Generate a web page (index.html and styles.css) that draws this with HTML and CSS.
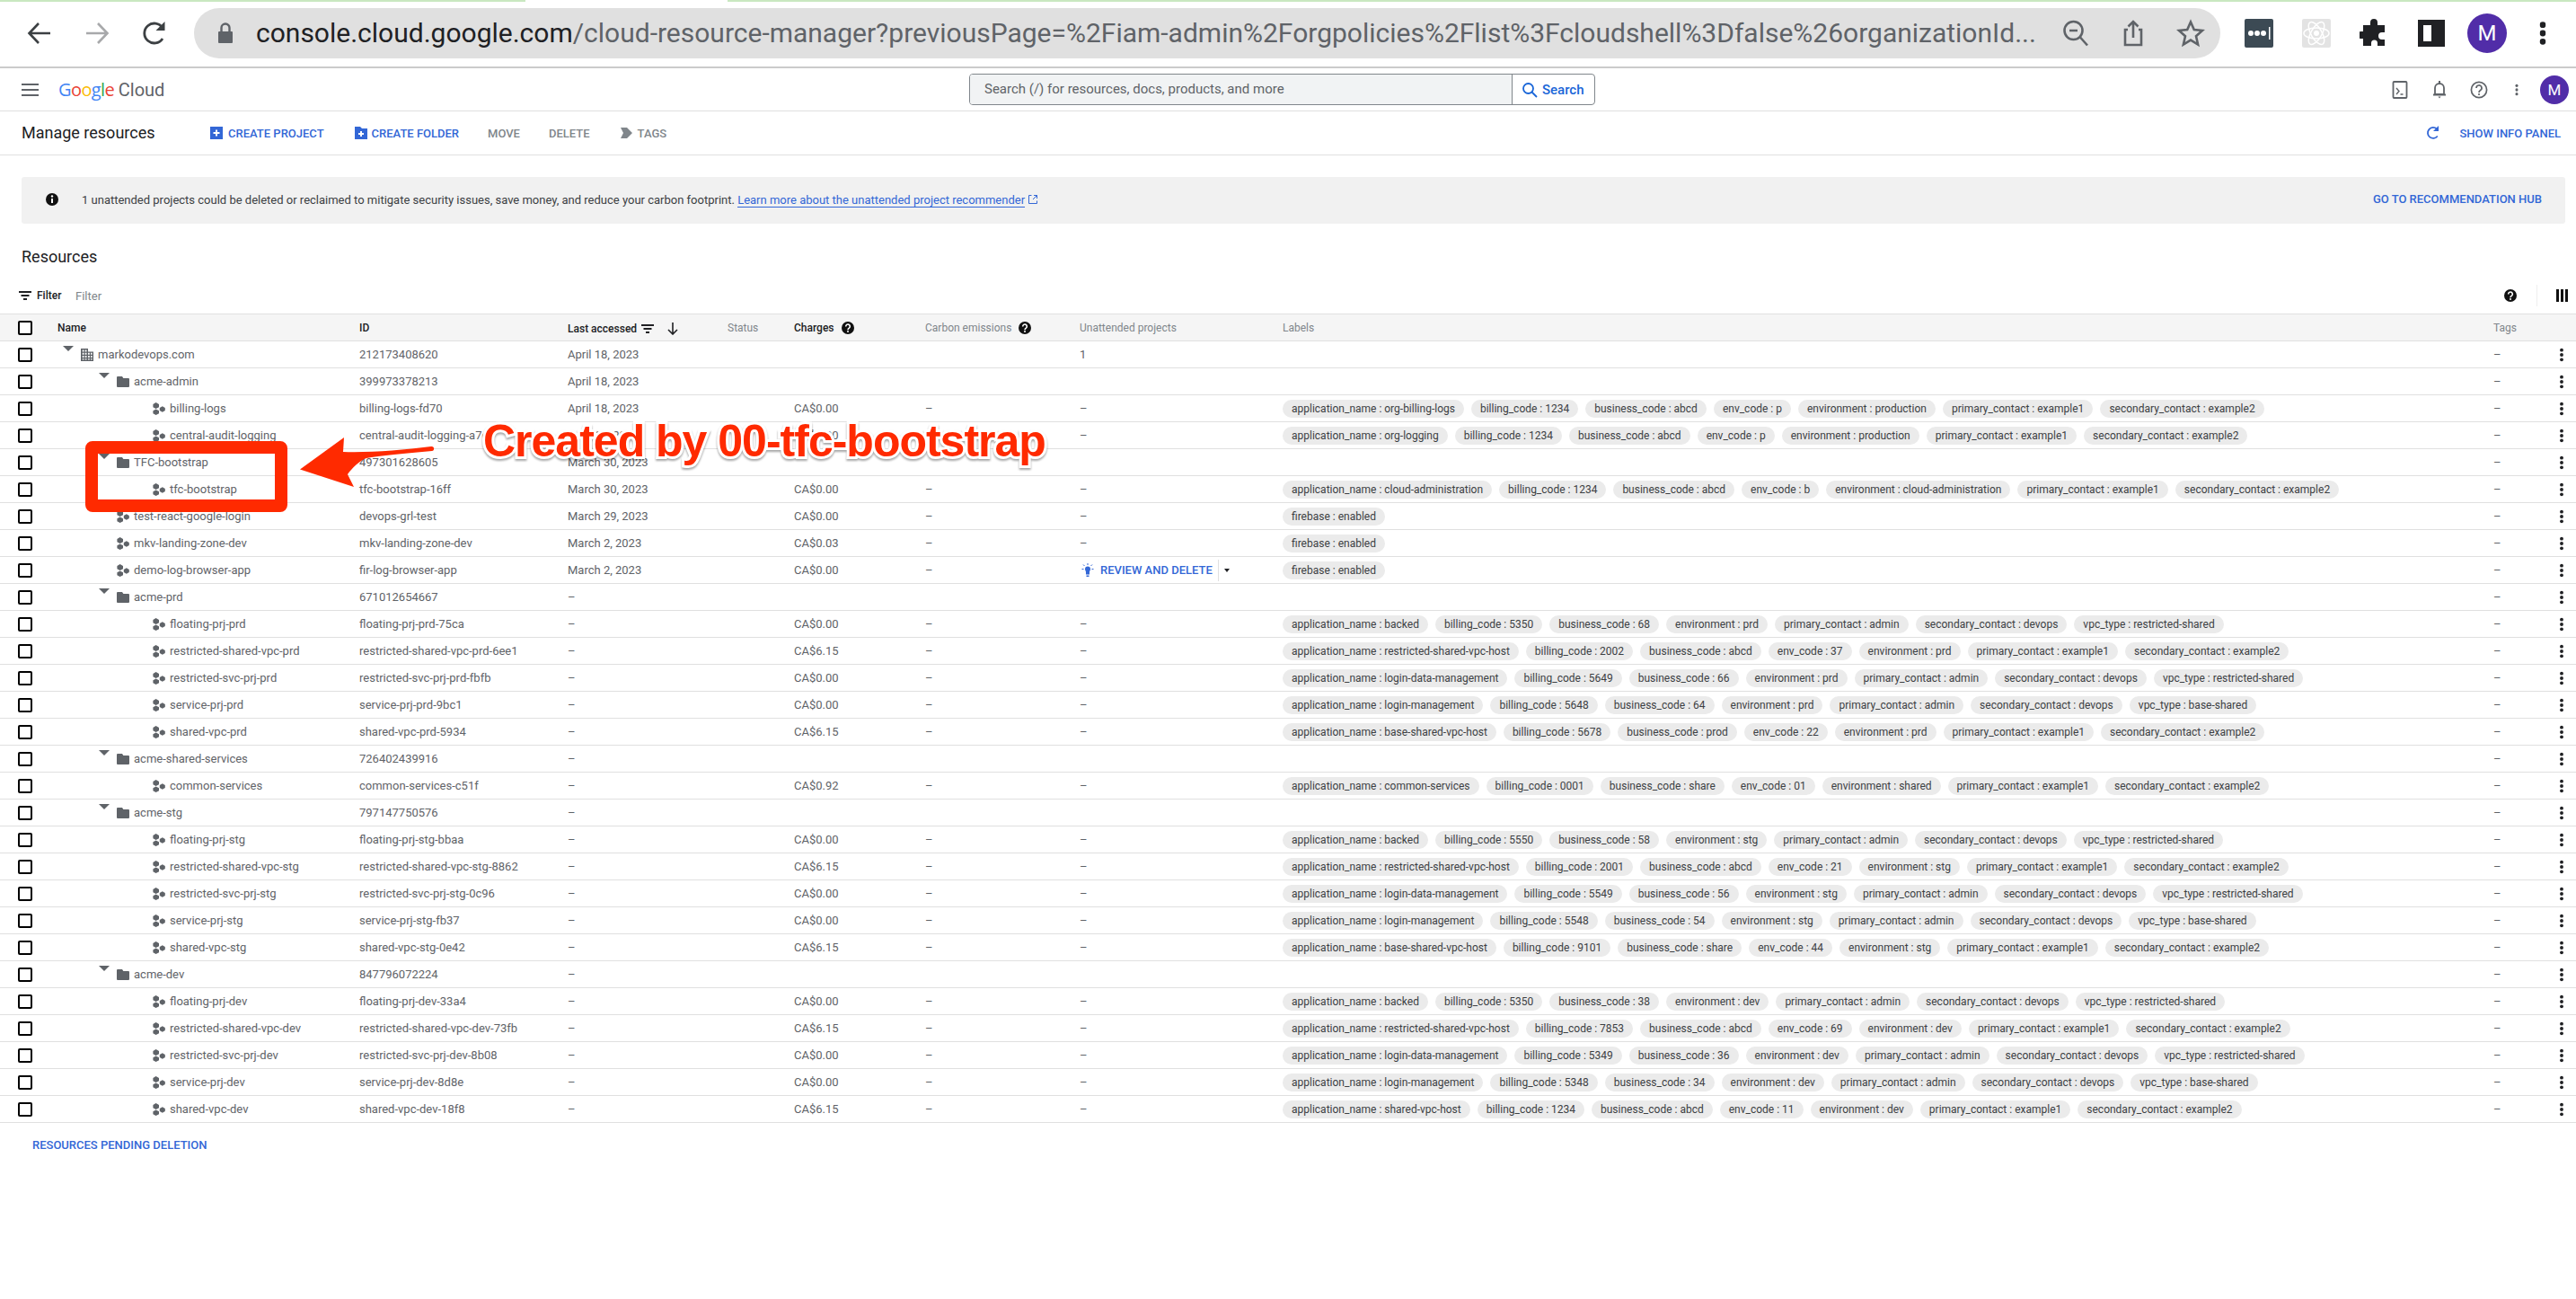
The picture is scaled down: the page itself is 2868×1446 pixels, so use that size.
FILE: index.html
```html
<!DOCTYPE html>
<html lang="en">
<head>
<meta charset="utf-8">
<title>Manage resources</title>
<link rel="stylesheet" href="styles.css">
</head>
<body>
<svg class="defs" width="0" height="0" aria-hidden="true">
  <symbol id="i-proj" viewBox="0 0 14 14"><path fill="#5f6368" d="M3.6 0 7 1.9v3.3L3.6 7 .4 5.2V1.9zM3.6 7.4 7 9.3v3L3.6 14 .4 12.3v-3zM10.8 4.3l3 1.6v3.2l-3 1.6-3-1.6V5.9z"/></symbol>
  <symbol id="i-folder" viewBox="0 0 14 12"><path fill="#5f6368" d="M0 1a1 1 0 0 1 1-1h5l1.4 2H13a1 1 0 0 1 1 1v8a1 1 0 0 1-1 1H1a1 1 0 0 1-1-1z"/></symbol>
  <symbol id="i-org" viewBox="0 0 14 14"><path fill="#5f6368" fill-rule="evenodd" d="M0 0h8v3.5h6V14H0zM1.7 1.6v1.9h1.8V1.6zm3 0v1.9h1.8V1.6zm-3 3.2v1.9h1.8V4.8zm3 0v1.9h1.8V4.8zm3.3 0v1.9h1.8V4.8zm3 0v1.9h1.6V4.8zM1.7 8v1.9h1.8V8zm3 0v1.9h1.8V8zM8 8v1.9h1.8V8zm3 0v1.9h1.6V8zm-9.3 3.2v1.4h1.8v-1.4zm3 0v1.4h1.8v-1.4zm3.3 0v1.4h1.8v-1.4zm3 0v1.4h1.6v-1.4z"/></symbol>
  <symbol id="i-kebab" viewBox="0 0 6 24"><circle cx="3" cy="4" r="2.9"/><circle cx="3" cy="12" r="2.9"/><circle cx="3" cy="20" r="2.9"/></symbol>
  <symbol id="i-help" viewBox="0 0 14 14"><circle cx="7" cy="7" r="7" fill="#111"/><path fill="none" stroke="#fff" stroke-width="1.6" d="M4.7 5.4A2.3 2.3 0 1 1 8.4 7.2c-.9.6-1.4 1-1.4 2"/><circle cx="7" cy="11" r="1" fill="#fff"/></symbol>
</svg>

<div class="tabstrip"><span class="tab-a"></span><span class="tab-b"></span></div>

<header class="chrome">
  <svg class="cicon" viewBox="0 0 32 32"><path fill="none" stroke="#3c4043" stroke-width="2.6" d="M28 16H5M15 5 4.5 16 15 27"/></svg>
  <svg class="cicon" viewBox="0 0 32 32"><path fill="none" stroke="#a8a9ab" stroke-width="2.6" d="M4 16h23M17 5l10.500 11L17 27"/></svg>
  <svg class="cicon" viewBox="0 0 32 32"><path fill="none" stroke="#3c4043" stroke-width="2.8" d="M25 22a11 11 0 1 1 0-12"/><path fill="#3c4043" d="M27.500 3v10h-10z"/></svg>
  <div class="omnibox">
    <svg class="lock" viewBox="0 0 16 24"><path fill="#5f6368" d="M1 10h14a1 1 0 0 1 1 1v11a1 1 0 0 1-1 1H1a1 1 0 0 1-1-1V11a1 1 0 0 1 1-1z"/><path fill="none" stroke="#5f6368" stroke-width="2.400" d="M3.500 11V6a4.500 4.500 0 0 1 9 0v5"/></svg>
    <div class="url"><b>console.cloud.google.com</b>/cloud-resource-manager?previousPage=%2Fiam-admin%2Forgpolicies%2Flist%3Fcloudshell%3Dfalse%26organizationId...</div>
    <svg class="oicon" viewBox="0 0 32 32"><circle cx="13.500" cy="13" r="10" fill="none" stroke="#5f6368" stroke-width="2.600"/><path stroke="#5f6368" stroke-width="2.600" d="M9 13h9M21 20.500l8 9"/></svg>
    <svg class="oicon" viewBox="0 0 32 32"><path fill="none" stroke="#5f6368" stroke-width="2.600" d="M10 12H7v17h18V12h-3M16 21V3M10.500 8.500 16 3l5.500 5.500"/></svg>
    <svg class="oicon" viewBox="0 0 32 32"><path fill="none" stroke="#5f6368" stroke-width="2.600" d="m16 3.500 3.800 8.600 9.200.9-7 6.200 2.100 9.300L16 23.600l-8.100 4.900L10 19.200l-7-6.200 9.200-.9z"/></svg>
  </div>
  <div class="exts">
    <span class="ext ext-lp"><svg viewBox="0 0 32 32" width="32" height="32"><circle cx="7" cy="16" r="3" fill="#fff"/><circle cx="14" cy="16" r="3" fill="#fff"/><circle cx="21" cy="16" r="3" fill="#fff"/><rect x="27" y="9" width="1.500" height="14" fill="#fff"/></svg></span>
    <span class="ext ext-re"><svg viewBox="0 0 32 32" width="32" height="32"><g fill="none" stroke="#fff" stroke-width="1.500"><ellipse cx="16" cy="16" rx="14" ry="6"/><ellipse cx="16" cy="16" rx="14" ry="6" transform="rotate(60 16 16)"/><ellipse cx="16" cy="16" rx="14" ry="6" transform="rotate(120 16 16)"/></g><circle cx="16" cy="16" r="3" fill="#fff"/></svg></span>
    <svg class="ext-p" viewBox="0 0 32 32"><path fill="#202124" d="M12 4a4 4 0 0 1 8 0v3h8v8h-3a4 4 0 0 0 0 8h3v7h-8v-3a3.500 3.500 0 0 0-7 0v3H4v-8H2a4 4 0 0 1 0-8h2V7h8z"/></svg>
    <svg class="ext-p" viewBox="0 0 32 32"><path fill="#202124" fill-rule="evenodd" d="M1 1h30v30H1zM7 7v18h9V7z"/></svg>
    <span class="avatar avatar-l">M</span>
    <svg class="ckebab" viewBox="0 0 6 24"><use href="#i-kebab"/></svg>
  </div>
</header>

<div class="appbar">
  <div class="burger"><span></span><span></span><span></span></div>
  <div class="logo"><i class="g-b">G</i><i class="g-r">o</i><i class="g-y">o</i><i class="g-b">g</i><i class="g-g">l</i><i class="g-r">e</i> <em>Cloud</em></div>
  <div class="search">
    <div class="search-in">Search (/) for resources, docs, products, and more</div>
    <div class="search-btn"><svg viewBox="0 0 18 18" width="18" height="18"><circle cx="7.500" cy="7.500" r="5.500" fill="none" stroke="#1a66d8" stroke-width="1.800"/><path stroke="#1a66d8" stroke-width="1.800" d="m11.500 11.500 5.500 5.500"/></svg>Search</div>
  </div>
  <div class="app-right">
    <svg class="aicon" viewBox="0 0 20 20"><rect x="2.500" y="1" width="15" height="18" rx="1" fill="none" stroke="#5f6368" stroke-width="1.800"/><path fill="none" stroke="#5f6368" stroke-width="1.400" d="m6 8 3 3.500L6 15M10.500 15h3"/></svg>
    <svg class="aicon" viewBox="0 0 20 20"><path fill="none" stroke="#5f6368" stroke-width="1.800" d="M5 15V8a5 5 0 0 1 10 0v7zM3 15.500h14"/><path fill="#5f6368" d="M8.500 17.500h3L10 19.500zM9 0h2v3H9z"/></svg>
    <svg class="aicon" viewBox="0 0 20 20"><circle cx="10" cy="10" r="8.600" fill="none" stroke="#5f6368" stroke-width="1.700"/><path fill="none" stroke="#5f6368" stroke-width="1.700" d="M7 8a3 3 0 1 1 4.500 2.500c-1 .7-1.500 1.200-1.500 2.500"/><circle cx="10" cy="15" r="1.100" fill="#5f6368"/></svg>
    <svg class="akebab" viewBox="0 0 6 24"><use href="#i-kebab"/></svg>
    <span class="avatar avatar-s">M</span>
  </div>
</div>

<div class="actionbar">
  <h1 class="page-title">Manage resources</h1>
  <div class="act blue a-cp"><svg viewBox="0 0 14 14" width="14" height="14"><rect width="14" height="14" fill="#3367d6"/><path stroke="#fff" stroke-width="2" d="M7 3.500v7M3.500 7h7"/></svg>CREATE PROJECT</div>
  <div class="act blue a-cf"><svg viewBox="0 0 14 14" width="14" height="14"><path fill="#3367d6" d="M0 0h6l2 2h6v12H0z"/><path stroke="#fff" stroke-width="2" d="M7 5v6M4 8h6"/></svg>CREATE FOLDER</div>
  <div class="act grey a-mv">MOVE</div>
  <div class="act grey a-dl">DELETE</div>
  <div class="act grey a-tg"><svg viewBox="0 0 13 14" width="13" height="14"><path fill="#80868b" d="M0 1h7l6 6-6 6H0l3-6z"/></svg>TAGS</div>
  <svg class="refresh" viewBox="0 0 16 16"><path fill="none" stroke="#3367d6" stroke-width="1.800" d="M12.800 11.500A6 6 0 1 1 12 3.500"/><path fill="#3367d6" d="M14 0v6H8z"/></svg>
  <div class="act blue">SHOW INFO PANEL</div>
</div>

<section class="banner">
  <svg class="banner-i" viewBox="0 0 14 14"><circle cx="7" cy="7" r="7" fill="#111"/><path stroke="#fff" stroke-width="2" d="M7 6v5"/><circle cx="7" cy="3.500" r="1.200" fill="#fff"/></svg>
  <p class="banner-t">1 unattended projects could be deleted or reclaimed to mitigate security issues, save money, and reduce your carbon footprint. <a class="link">Learn more about the unattended project recommender</a></p>
  <svg class="ext-link" viewBox="0 0 10 10"><path fill="none" stroke="#3367d6" d="M3.500.5H.5v9h9v-3M5 5 9.500.5M6 .5h3.500V4"/></svg>
  <div class="act blue hub">GO TO RECOMMENDATION HUB</div>
</section>

<h2 class="section-title">Resources</h2>

<div class="filter">
  <svg class="f-i" viewBox="0 0 14 10"><path stroke="#202124" stroke-width="1.800" d="M0 1h14M2.500 5h9M5 9h4"/></svg>
  <span class="f-l">Filter</span><span class="f-p">Filter</span>
  <svg class="f-h" viewBox="0 0 14 14"><use href="#i-help"/></svg>
  <span class="f-d"></span>
  <svg class="f-c" viewBox="0 0 13 14"><path fill="#111" d="M0 0h3v14H0zM5 0h3v14H5zM10 0h3v14h-3z"/></svg>
</div>

<div class="table">
  <div class="row head">
    <span class="chk"></span>
    <span class="c-name th">Name</span>
    <span class="c-id th">ID</span>
    <span class="c-date th sorted">Last accessed<svg class="s-f" viewBox="0 0 14 10"><path stroke="#202124" stroke-width="1.800" d="M0 1h14M2.500 5h9M5 9h4"/></svg><svg class="s-a" viewBox="0 0 12 14"><path fill="none" stroke="#202124" stroke-width="1.600" d="M6 0v13M1 8l5 5 5-5"/></svg></span>
    <span class="c-status th off">Status</span>
    <span class="c-charge th">Charges<svg class="th-h" viewBox="0 0 14 14"><use href="#i-help"/></svg></span>
    <span class="c-carbon th off">Carbon emissions<svg class="th-h" viewBox="0 0 14 14"><use href="#i-help"/></svg></span>
    <span class="c-unatt th off">Unattended projects</span>
    <span class="c-labels th off">Labels</span>
    <span class="c-tags th off">Tags</span>
  </div>

  <div class="row"><span class="chk"></span><span class="c-name l0"><i class="tri"></i><svg class="ic"><use href="#i-org"/></svg>markodevops.com</span><span class="c-id">212173408620</span><span class="c-date">April 18, 2023</span><span class="c-unatt">1</span><span class="c-tags">–</span><svg class="c-more"><use href="#i-kebab"/></svg></div>

  <div class="row"><span class="chk"></span><span class="c-name l1"><i class="tri"></i><svg class="ic f"><use href="#i-folder"/></svg>acme-admin</span><span class="c-id">399973378213</span><span class="c-date">April 18, 2023</span><span class="c-tags">–</span><svg class="c-more"><use href="#i-kebab"/></svg></div>

  <div class="row"><span class="chk"></span><span class="c-name l2"><svg class="ic"><use href="#i-proj"/></svg>billing-logs</span><span class="c-id">billing-logs-fd70</span><span class="c-date">April 18, 2023</span><span class="c-charge">CA$0.00</span><span class="c-carbon">–</span><span class="c-unatt">–</span><span class="c-labels"><b>application_name : org-billing-logs</b><b>billing_code : 1234</b><b>business_code : abcd</b><b>env_code : p</b><b>environment : production</b><b>primary_contact : example1</b><b>secondary_contact : example2</b></span><span class="c-tags">–</span><svg class="c-more"><use href="#i-kebab"/></svg></div>

  <div class="row"><span class="chk"></span><span class="c-name l2"><svg class="ic"><use href="#i-proj"/></svg>central-audit-logging</span><span class="c-id">central-audit-logging-a7e0</span><span class="c-date">April 18, 2023</span><span class="c-charge">CA$0.00</span><span class="c-carbon">–</span><span class="c-unatt">–</span><span class="c-labels"><b>application_name : org-logging</b><b>billing_code : 1234</b><b>business_code : abcd</b><b>env_code : p</b><b>environment : production</b><b>primary_contact : example1</b><b>secondary_contact : example2</b></span><span class="c-tags">–</span><svg class="c-more"><use href="#i-kebab"/></svg></div>

  <div class="row"><span class="chk"></span><span class="c-name l1"><i class="tri"></i><svg class="ic f"><use href="#i-folder"/></svg>TFC-bootstrap</span><span class="c-id">497301628605</span><span class="c-date">March 30, 2023</span><span class="c-tags">–</span><svg class="c-more"><use href="#i-kebab"/></svg></div>

  <div class="row"><span class="chk"></span><span class="c-name l2"><svg class="ic"><use href="#i-proj"/></svg>tfc-bootstrap</span><span class="c-id">tfc-bootstrap-16ff</span><span class="c-date">March 30, 2023</span><span class="c-charge">CA$0.00</span><span class="c-carbon">–</span><span class="c-unatt">–</span><span class="c-labels"><b>application_name : cloud-administration</b><b>billing_code : 1234</b><b>business_code : abcd</b><b>env_code : b</b><b>environment : cloud-administration</b><b>primary_contact : example1</b><b>secondary_contact : example2</b></span><span class="c-tags">–</span><svg class="c-more"><use href="#i-kebab"/></svg></div>

  <div class="row"><span class="chk"></span><span class="c-name l1"><svg class="ic p1"><use href="#i-proj"/></svg>test-react-google-login</span><span class="c-id">devops-grl-test</span><span class="c-date">March 29, 2023</span><span class="c-charge">CA$0.00</span><span class="c-carbon">–</span><span class="c-unatt">–</span><span class="c-labels"><b>firebase : enabled</b></span><span class="c-tags">–</span><svg class="c-more"><use href="#i-kebab"/></svg></div>

  <div class="row"><span class="chk"></span><span class="c-name l1"><svg class="ic p1"><use href="#i-proj"/></svg>mkv-landing-zone-dev</span><span class="c-id">mkv-landing-zone-dev</span><span class="c-date">March 2, 2023</span><span class="c-charge">CA$0.03</span><span class="c-carbon">–</span><span class="c-unatt">–</span><span class="c-labels"><b>firebase : enabled</b></span><span class="c-tags">–</span><svg class="c-more"><use href="#i-kebab"/></svg></div>

  <div class="row"><span class="chk"></span><span class="c-name l1"><svg class="ic p1"><use href="#i-proj"/></svg>demo-log-browser-app</span><span class="c-id">fir-log-browser-app</span><span class="c-date">March 2, 2023</span><span class="c-charge">CA$0.00</span><span class="c-carbon">–</span><span class="c-unatt review"><svg class="bulb" viewBox="0 0 14 16"><path fill="#3367d6" d="M4 6.500a3 3 0 0 1 6 0c0 1.500-1 2-1 3.500v2.500H5V10c0-1.500-1-2-1-3.500zM5.500 13.500h3V15h-3z"/><path stroke="#3367d6" d="M7 0v2M.5 6.500h2M11.500 6.500h2M2 1.500 3.500 3M12 1.500 10.500 3"/></svg><span class="rv-t">REVIEW AND DELETE</span><span class="rv-c"></span></span><span class="c-labels"><b>firebase : enabled</b></span><span class="c-tags">–</span><svg class="c-more"><use href="#i-kebab"/></svg></div>

  <div class="row"><span class="chk"></span><span class="c-name l1"><i class="tri"></i><svg class="ic f"><use href="#i-folder"/></svg>acme-prd</span><span class="c-id">671012654667</span><span class="c-date">–</span><span class="c-tags">–</span><svg class="c-more"><use href="#i-kebab"/></svg></div>

  <div class="row"><span class="chk"></span><span class="c-name l2"><svg class="ic"><use href="#i-proj"/></svg>floating-prj-prd</span><span class="c-id">floating-prj-prd-75ca</span><span class="c-date">–</span><span class="c-charge">CA$0.00</span><span class="c-carbon">–</span><span class="c-unatt">–</span><span class="c-labels"><b>application_name : backed</b><b>billing_code : 5350</b><b>business_code : 68</b><b>environment : prd</b><b>primary_contact : admin</b><b>secondary_contact : devops</b><b>vpc_type : restricted-shared</b></span><span class="c-tags">–</span><svg class="c-more"><use href="#i-kebab"/></svg></div>

  <div class="row"><span class="chk"></span><span class="c-name l2"><svg class="ic"><use href="#i-proj"/></svg>restricted-shared-vpc-prd</span><span class="c-id">restricted-shared-vpc-prd-6ee1</span><span class="c-date">–</span><span class="c-charge">CA$6.15</span><span class="c-carbon">–</span><span class="c-unatt">–</span><span class="c-labels"><b>application_name : restricted-shared-vpc-host</b><b>billing_code : 2002</b><b>business_code : abcd</b><b>env_code : 37</b><b>environment : prd</b><b>primary_contact : example1</b><b>secondary_contact : example2</b></span><span class="c-tags">–</span><svg class="c-more"><use href="#i-kebab"/></svg></div>

  <div class="row"><span class="chk"></span><span class="c-name l2"><svg class="ic"><use href="#i-proj"/></svg>restricted-svc-prj-prd</span><span class="c-id">restricted-svc-prj-prd-fbfb</span><span class="c-date">–</span><span class="c-charge">CA$0.00</span><span class="c-carbon">–</span><span class="c-unatt">–</span><span class="c-labels"><b>application_name : login-data-management</b><b>billing_code : 5649</b><b>business_code : 66</b><b>environment : prd</b><b>primary_contact : admin</b><b>secondary_contact : devops</b><b>vpc_type : restricted-shared</b></span><span class="c-tags">–</span><svg class="c-more"><use href="#i-kebab"/></svg></div>

  <div class="row"><span class="chk"></span><span class="c-name l2"><svg class="ic"><use href="#i-proj"/></svg>service-prj-prd</span><span class="c-id">service-prj-prd-9bc1</span><span class="c-date">–</span><span class="c-charge">CA$0.00</span><span class="c-carbon">–</span><span class="c-unatt">–</span><span class="c-labels"><b>application_name : login-management</b><b>billing_code : 5648</b><b>business_code : 64</b><b>environment : prd</b><b>primary_contact : admin</b><b>secondary_contact : devops</b><b>vpc_type : base-shared</b></span><span class="c-tags">–</span><svg class="c-more"><use href="#i-kebab"/></svg></div>

  <div class="row"><span class="chk"></span><span class="c-name l2"><svg class="ic"><use href="#i-proj"/></svg>shared-vpc-prd</span><span class="c-id">shared-vpc-prd-5934</span><span class="c-date">–</span><span class="c-charge">CA$6.15</span><span class="c-carbon">–</span><span class="c-unatt">–</span><span class="c-labels"><b>application_name : base-shared-vpc-host</b><b>billing_code : 5678</b><b>business_code : prod</b><b>env_code : 22</b><b>environment : prd</b><b>primary_contact : example1</b><b>secondary_contact : example2</b></span><span class="c-tags">–</span><svg class="c-more"><use href="#i-kebab"/></svg></div>

  <div class="row"><span class="chk"></span><span class="c-name l1"><i class="tri"></i><svg class="ic f"><use href="#i-folder"/></svg>acme-shared-services</span><span class="c-id">726402439916</span><span class="c-date">–</span><span class="c-tags">–</span><svg class="c-more"><use href="#i-kebab"/></svg></div>

  <div class="row"><span class="chk"></span><span class="c-name l2"><svg class="ic"><use href="#i-proj"/></svg>common-services</span><span class="c-id">common-services-c51f</span><span class="c-date">–</span><span class="c-charge">CA$0.92</span><span class="c-carbon">–</span><span class="c-unatt">–</span><span class="c-labels"><b>application_name : common-services</b><b>billing_code : 0001</b><b>business_code : share</b><b>env_code : 01</b><b>environment : shared</b><b>primary_contact : example1</b><b>secondary_contact : example2</b></span><span class="c-tags">–</span><svg class="c-more"><use href="#i-kebab"/></svg></div>

  <div class="row"><span class="chk"></span><span class="c-name l1"><i class="tri"></i><svg class="ic f"><use href="#i-folder"/></svg>acme-stg</span><span class="c-id">797147750576</span><span class="c-date">–</span><span class="c-tags">–</span><svg class="c-more"><use href="#i-kebab"/></svg></div>

  <div class="row"><span class="chk"></span><span class="c-name l2"><svg class="ic"><use href="#i-proj"/></svg>floating-prj-stg</span><span class="c-id">floating-prj-stg-bbaa</span><span class="c-date">–</span><span class="c-charge">CA$0.00</span><span class="c-carbon">–</span><span class="c-unatt">–</span><span class="c-labels"><b>application_name : backed</b><b>billing_code : 5550</b><b>business_code : 58</b><b>environment : stg</b><b>primary_contact : admin</b><b>secondary_contact : devops</b><b>vpc_type : restricted-shared</b></span><span class="c-tags">–</span><svg class="c-more"><use href="#i-kebab"/></svg></div>

  <div class="row"><span class="chk"></span><span class="c-name l2"><svg class="ic"><use href="#i-proj"/></svg>restricted-shared-vpc-stg</span><span class="c-id">restricted-shared-vpc-stg-8862</span><span class="c-date">–</span><span class="c-charge">CA$6.15</span><span class="c-carbon">–</span><span class="c-unatt">–</span><span class="c-labels"><b>application_name : restricted-shared-vpc-host</b><b>billing_code : 2001</b><b>business_code : abcd</b><b>env_code : 21</b><b>environment : stg</b><b>primary_contact : example1</b><b>secondary_contact : example2</b></span><span class="c-tags">–</span><svg class="c-more"><use href="#i-kebab"/></svg></div>

  <div class="row"><span class="chk"></span><span class="c-name l2"><svg class="ic"><use href="#i-proj"/></svg>restricted-svc-prj-stg</span><span class="c-id">restricted-svc-prj-stg-0c96</span><span class="c-date">–</span><span class="c-charge">CA$0.00</span><span class="c-carbon">–</span><span class="c-unatt">–</span><span class="c-labels"><b>application_name : login-data-management</b><b>billing_code : 5549</b><b>business_code : 56</b><b>environment : stg</b><b>primary_contact : admin</b><b>secondary_contact : devops</b><b>vpc_type : restricted-shared</b></span><span class="c-tags">–</span><svg class="c-more"><use href="#i-kebab"/></svg></div>

  <div class="row"><span class="chk"></span><span class="c-name l2"><svg class="ic"><use href="#i-proj"/></svg>service-prj-stg</span><span class="c-id">service-prj-stg-fb37</span><span class="c-date">–</span><span class="c-charge">CA$0.00</span><span class="c-carbon">–</span><span class="c-unatt">–</span><span class="c-labels"><b>application_name : login-management</b><b>billing_code : 5548</b><b>business_code : 54</b><b>environment : stg</b><b>primary_contact : admin</b><b>secondary_contact : devops</b><b>vpc_type : base-shared</b></span><span class="c-tags">–</span><svg class="c-more"><use href="#i-kebab"/></svg></div>

  <div class="row"><span class="chk"></span><span class="c-name l2"><svg class="ic"><use href="#i-proj"/></svg>shared-vpc-stg</span><span class="c-id">shared-vpc-stg-0e42</span><span class="c-date">–</span><span class="c-charge">CA$6.15</span><span class="c-carbon">–</span><span class="c-unatt">–</span><span class="c-labels"><b>application_name : base-shared-vpc-host</b><b>billing_code : 9101</b><b>business_code : share</b><b>env_code : 44</b><b>environment : stg</b><b>primary_contact : example1</b><b>secondary_contact : example2</b></span><span class="c-tags">–</span><svg class="c-more"><use href="#i-kebab"/></svg></div>

  <div class="row"><span class="chk"></span><span class="c-name l1"><i class="tri"></i><svg class="ic f"><use href="#i-folder"/></svg>acme-dev</span><span class="c-id">847796072224</span><span class="c-date">–</span><span class="c-tags">–</span><svg class="c-more"><use href="#i-kebab"/></svg></div>

  <div class="row"><span class="chk"></span><span class="c-name l2"><svg class="ic"><use href="#i-proj"/></svg>floating-prj-dev</span><span class="c-id">floating-prj-dev-33a4</span><span class="c-date">–</span><span class="c-charge">CA$0.00</span><span class="c-carbon">–</span><span class="c-unatt">–</span><span class="c-labels"><b>application_name : backed</b><b>billing_code : 5350</b><b>business_code : 38</b><b>environment : dev</b><b>primary_contact : admin</b><b>secondary_contact : devops</b><b>vpc_type : restricted-shared</b></span><span class="c-tags">–</span><svg class="c-more"><use href="#i-kebab"/></svg></div>

  <div class="row"><span class="chk"></span><span class="c-name l2"><svg class="ic"><use href="#i-proj"/></svg>restricted-shared-vpc-dev</span><span class="c-id">restricted-shared-vpc-dev-73fb</span><span class="c-date">–</span><span class="c-charge">CA$6.15</span><span class="c-carbon">–</span><span class="c-unatt">–</span><span class="c-labels"><b>application_name : restricted-shared-vpc-host</b><b>billing_code : 7853</b><b>business_code : abcd</b><b>env_code : 69</b><b>environment : dev</b><b>primary_contact : example1</b><b>secondary_contact : example2</b></span><span class="c-tags">–</span><svg class="c-more"><use href="#i-kebab"/></svg></div>

  <div class="row"><span class="chk"></span><span class="c-name l2"><svg class="ic"><use href="#i-proj"/></svg>restricted-svc-prj-dev</span><span class="c-id">restricted-svc-prj-dev-8b08</span><span class="c-date">–</span><span class="c-charge">CA$0.00</span><span class="c-carbon">–</span><span class="c-unatt">–</span><span class="c-labels"><b>application_name : login-data-management</b><b>billing_code : 5349</b><b>business_code : 36</b><b>environment : dev</b><b>primary_contact : admin</b><b>secondary_contact : devops</b><b>vpc_type : restricted-shared</b></span><span class="c-tags">–</span><svg class="c-more"><use href="#i-kebab"/></svg></div>

  <div class="row"><span class="chk"></span><span class="c-name l2"><svg class="ic"><use href="#i-proj"/></svg>service-prj-dev</span><span class="c-id">service-prj-dev-8d8e</span><span class="c-date">–</span><span class="c-charge">CA$0.00</span><span class="c-carbon">–</span><span class="c-unatt">–</span><span class="c-labels"><b>application_name : login-management</b><b>billing_code : 5348</b><b>business_code : 34</b><b>environment : dev</b><b>primary_contact : admin</b><b>secondary_contact : devops</b><b>vpc_type : base-shared</b></span><span class="c-tags">–</span><svg class="c-more"><use href="#i-kebab"/></svg></div>

  <div class="row"><span class="chk"></span><span class="c-name l2"><svg class="ic"><use href="#i-proj"/></svg>shared-vpc-dev</span><span class="c-id">shared-vpc-dev-18f8</span><span class="c-date">–</span><span class="c-charge">CA$6.15</span><span class="c-carbon">–</span><span class="c-unatt">–</span><span class="c-labels"><b>application_name : shared-vpc-host</b><b>billing_code : 1234</b><b>business_code : abcd</b><b>env_code : 11</b><b>environment : dev</b><b>primary_contact : example1</b><b>secondary_contact : example2</b></span><span class="c-tags">–</span><svg class="c-more"><use href="#i-kebab"/></svg></div>
</div>

<div class="act blue pending">RESOURCES PENDING DELETION</div>

<div class="anno-box"></div>
<svg class="anno-arrow" viewBox="0 0 160 60"><path fill="#ff2a00" d="M2 35.500 51 0l-1 16c30 1 65-2 98-6 4-.5 4 4.500 1 5-29 3-59 5-73 8-8 3-16 11-21 18l7 14z"/></svg>
<div class="anno-text">Created by 00-tfc-bootstrap</div>
</body>
</html>
```

FILE: styles.css
```css
* { box-sizing: border-box; }
html, body { margin: 0; background: #fff; }
body {
  width: 2868px;
  height: 1446px;
  overflow: hidden;
  position: relative;
  font-family: Roboto, "Liberation Sans", sans-serif;
  font-size: 13px;
  color: #5f6368;
}
.defs { position: absolute; }

/* Browser chrome */
.tabstrip { height: 2px; display: flex; }
.tab-a { width: 585px; background: #c9e8c0; }
.tab-b { margin-left: 225px; flex: 1; background: #c9e8c0; }
.chrome {
  height: 74px;
  display: flex;
  align-items: center;
  padding: 0 0 2px 28px;
  border-bottom: 2px solid #cbcbcb;
}
.cicon { width: 32px; height: 32px; margin-right: 32px; flex: none; }
.omnibox {
  width: 2256px;
  height: 56px;
  margin-left: -4px;
  border-radius: 28px;
  background: #e0e0e0;
  display: flex;
  align-items: center;
  padding-left: 27px;
}
.lock { width: 16px; height: 24px; flex: none; }
.url {
  margin-left: 26px;
  width: 1986px;
  flex: none;
  white-space: nowrap;
  font-size: 30px;
  line-height: 40px;
  color: #5f6368;
}
.url b { font-weight: 400; color: #202124; }
.oicon { width: 32px; height: 32px; flex: none; margin-left: 24px; margin-right: 8px; }
.oicon:first-of-type { margin-left: 0; }
.exts { display: flex; align-items: center; margin-left: 27px; }
.ext { width: 32px; height: 32px; border-radius: 2px; display: block; margin-right: 32px; }
.ext svg { display: block; }
.ext-lp { background: #3c4a54; }
.ext-re { background: #e3e3e3; }
.ext-p { width: 32px; height: 32px; margin-right: 32px; flex: none; }
.avatar {
  display: flex;
  align-items: center;
  justify-content: center;
  border-radius: 50%;
  background: #512da8;
  color: #fff;
}
.avatar-l { width: 44px; height: 44px; font-size: 24px; margin-left: -8px; }
.ckebab { width: 8px; height: 28px; margin-left: 36px; fill: #202124; }

/* Console app bar */
.appbar {
  height: 48px;
  display: flex;
  align-items: center;
  padding-left: 24px;
  border-bottom: 1px solid #e0e0e0;
}
.burger { width: 19px; display: flex; flex-direction: column; gap: 4px; }
.burger span { height: 2px; background: #5f6368; }
.logo { margin-left: 22px; width: 300px; font-family: "Open Sans", sans-serif; font-size: 20px; letter-spacing: -.6px; white-space: nowrap; }
.logo i { font-style: normal; }
.logo em { font-style: normal; color: #5f6368; font-family: Roboto, sans-serif; margin-left: 0; letter-spacing: 0; }
.g-b { color: #4285f4; } .g-r { color: #ea4335; } .g-y { color: #fbbc04; } .g-g { color: #34a853; }
.search {
  margin-left: 714px;
  width: 697px;
  height: 35px;
  display: flex;
  border: 1px solid #80868b;
  border-radius: 4px;
  overflow: hidden;
}
.search-in {
  width: 604px;
  background: #f1f3f4;
  border-right: 1px solid #80868b;
  padding-left: 16px;
  line-height: 33px;
  font-size: 15px;
  color: #5f6368;
}
.search-btn { flex: 1; display: flex; align-items: center; gap: 5px; padding-left: 10px; color: #1a66d8; font-size: 15px; font-weight: 500; }
.app-right { margin-left: auto; display: flex; align-items: center; padding-right: 8px; }
.aicon { width: 20px; height: 20px; margin-right: 24px; flex: none; }
.akebab { width: 4px; height: 14px; margin-left: 6px; fill: #5f6368; }
.avatar-s { width: 32px; height: 32px; font-size: 17px; margin-left: 24px; }

/* Action bar */
.actionbar {
  height: 49px;
  display: flex;
  align-items: center;
  padding: 0 17px 0 24px;
  border-bottom: 1px solid #e0e0e0;
}
.page-title { margin: 0 62px 2px 0; width: 148px; font-size: 18px; font-weight: 400; color: #202124; white-space: nowrap; }
.act {
  font-size: 13px;
  font-weight: 500;
  display: flex;
  align-items: center;
  gap: 6px;
  white-space: nowrap;
}
.blue { color: #3367d6; }
.grey { color: #80868b; }
.a-cp { margin-right: 34px; }
.a-cf { margin-right: 32px; gap: 5px; }
.a-mv { margin-right: 32px; }
.a-dl { margin-right: 34px; }
.refresh { width: 16px; height: 16px; margin-left: auto; margin-right: 21px; }

/* Banner */
.banner {
  position: relative;
  margin: 24px 12px 0 24px;
  height: 52px;
  background: #f1f1f1;
  border-radius: 3px;
  display: flex;
  align-items: center;
  padding: 0 26px 2px 27px;
}
.banner-i { width: 14px; height: 14px; flex: none; }
.banner-t { margin: 0 0 0 26px; font-size: 13px; color: #3c4043; white-space: nowrap; }
.link { color: #3367d6; border-bottom: 1px solid #3367d6; }
.ext-link { width: 10px; height: 10px; margin-left: 4px; }
.hub { margin-left: auto; padding-bottom: 2px; }

.section-title { margin: 25px 0 0 24px; height: 24px; font-size: 18px; line-height: 24px; font-weight: 400; color: #202124; }

/* Filter row */
.filter {
  margin-top: 21px;
  height: 20px;
  display: flex;
  align-items: center;
  padding-left: 21px;
  position: relative;
}
.f-i { width: 14px; height: 10px; }
.f-l { margin-left: 6px; width: 43px; color: #202124; font-size: 12px; font-weight: 500; }
.f-p { color: #80868b; font-size: 13px; }
.f-h { width: 14px; height: 14px; margin-left: auto; }
.f-d { width: 1px; height: 24px; background: #eee; margin-left: 22px; }
.f-c { width: 13px; height: 14px; margin-left: 21px; margin-right: 9px; }

/* Table */
.table { margin-top: 10px; border-top: 1px solid #e0e0e0; }
.row {
  height: 30px;
  display: grid;
  grid-template-columns: 64px 336px 232px 178px 74px 146px 172px 226px 1348px 64px 28px;
  align-items: center;
  border-bottom: 1px solid #e0e0e0;
  white-space: nowrap;
}
.row > * { grid-row: 1; }
.head { height: 30px; background: #f5f5f5; }
.chk { grid-column: 1; margin-left: 20px; width: 16px; height: 16px; border: 2px solid #000; border-radius: 2px; background: #fff; }
.c-name { grid-column: 2; display: flex; align-items: center; position: relative; }
.c-id { grid-column: 3; }
.c-date { grid-column: 4; }
.c-status { grid-column: 5; }
.c-charge { grid-column: 6; }
.c-carbon { grid-column: 7; }
.c-unatt { grid-column: 8; }
.c-labels { grid-column: 9; display: flex; gap: 8px; }
.c-tags { grid-column: 10; }
.c-more { grid-column: 11; width: 4px; height: 16px; margin-left: 10px; fill: #202124; }

.th { font-size: 12px; font-weight: 500; color: #202124; display: flex; align-items: center; }
.th.off { font-weight: 400; color: #80868b; }
.th-h { width: 14px; height: 14px; margin-left: 8px; }
.sorted { padding-top: 2px; }
.s-f { width: 14px; height: 10px; margin-left: 5px; }
.s-a { width: 12px; height: 14px; margin-left: 15px; }

.l0 { padding-left: 26px; }
.l1 { padding-left: 66px; }
.l2 { padding-left: 106px; }
.tri {
  position: absolute;
  margin-top: -14px;
  width: 0;
  height: 0;
  border: 6px solid transparent;
  border-top: 6px solid #5f6368;
  border-bottom: 0;
}
.l0 .tri { left: 6px; }
.l1 .tri { left: 46px; }
.ic { width: 14px; height: 14px; margin-right: 5px; flex: none; }
.ic.f { height: 12px; margin-top: 1px; }

.c-labels b {
  display: block;
  height: 20px;
  line-height: 20px;
  padding: 0 10px;
  border-radius: 10px;
  background: #ebebeb;
  color: #3c4043;
  font-size: 12px;
  font-weight: 400;
}

.review { display: flex; align-items: center; }
.bulb { width: 14px; height: 16px; margin-left: 2px; }
.rv-t { margin-left: 7px; font-size: 13px; font-weight: 500; color: #3367d6; padding-right: 6px; line-height: 24px; height: 24px; border-right: 1px solid #e0e0e0; }
.rv-c { margin-left: 6px; width: 0; height: 0; border: 3.500px solid transparent; border-top: 4px solid #202124; border-bottom: 0; }

.pending { margin: 16px 0 0 36px; height: 16px; }

/* Annotation overlay */
.anno-box {
  position: absolute;
  left: 95px;
  top: 491px;
  width: 225px;
  height: 79px;
  border: 14px solid #ff2a00;
  border-radius: 8px;
}
.anno-arrow { position: absolute; left: 332px; top: 487px; width: 160px; height: 60px; }
.anno-text {
  position: absolute;
  left: 538px;
  top: 461px;
  font-family: "Liberation Sans", Arial, sans-serif;
  font-weight: 700;
  font-size: 50px;
  letter-spacing: -1px;
  line-height: 60px;
  color: #ff2a00;
  white-space: nowrap;
  -webkit-text-stroke: 6px #fff;
  paint-order: stroke fill;
  filter: drop-shadow(0 2px 1px rgba(0,0,0,.35));
}
```
